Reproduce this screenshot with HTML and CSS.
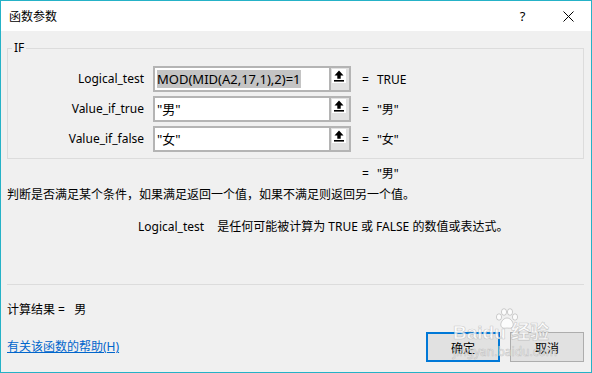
FILE: index.html
```html
<!DOCTYPE html>
<html>
<head>
    <title>函数参数</title>
    <link rel="stylesheet" href="styles.css">
</head>
<body>
    <div class="window">
        <div class="titlebar">
            <div class="title">函数参数</div>
            <div class="title-btn">?</div>
            <div class="title-btn close">
                <svg width="11" height="11" viewBox="0 0 11 11"><path d="M0.5 0.5 L10.5 10.5 M10.5 0.5 L0.5 10.5" stroke="#000" stroke-width="1" fill="none"/></svg>
            </div>
        </div>

        <div class="content">
            <fieldset class="group">
                <legend>IF</legend>

                <div class="arg-row">
                    <div class="arg-label">Logical_test</div>
                    <div class="field">
                        <div class="field-text"><span class="selected">MOD(MID(A2,17,1),2)=1</span></div>
                        <div class="pick"><svg width="14" height="14" viewBox="0 0 14 14"><rect width="14" height="14" fill="#fff"/><path d="M7 1.5 L11.5 6.5 L8.7 6.5 L8.7 9.8 L5.3 9.8 L5.3 6.5 L2.5 6.5 Z" fill="#000"/><rect x="2" y="11" width="10" height="1.6" fill="#000"/></svg></div>
                    </div>
                    <span class="eq">=</span>
                    <span class="arg-value">TRUE</span>
                </div>

                <div class="arg-row">
                    <div class="arg-label">Value_if_true</div>
                    <div class="field">
                        <div class="field-text">"男"</div>
                        <div class="pick"><svg width="14" height="14" viewBox="0 0 14 14"><rect width="14" height="14" fill="#fff"/><path d="M7 1.5 L11.5 6.5 L8.7 6.5 L8.7 9.8 L5.3 9.8 L5.3 6.5 L2.5 6.5 Z" fill="#000"/><rect x="2" y="11" width="10" height="1.6" fill="#000"/></svg></div>
                    </div>
                    <span class="eq">=</span>
                    <span class="arg-value">"男"</span>
                </div>

                <div class="arg-row">
                    <div class="arg-label">Value_if_false</div>
                    <div class="field">
                        <div class="field-text">"女"</div>
                        <div class="pick"><svg width="14" height="14" viewBox="0 0 14 14"><rect width="14" height="14" fill="#fff"/><path d="M7 1.5 L11.5 6.5 L8.7 6.5 L8.7 9.8 L5.3 9.8 L5.3 6.5 L2.5 6.5 Z" fill="#000"/><rect x="2" y="11" width="10" height="1.6" fill="#000"/></svg></div>
                    </div>
                    <span class="eq">=</span>
                    <span class="arg-value">"女"</span>
                </div>
            </fieldset>

            <div class="formula-result"><span>=</span><span class="arg-value">"男"</span></div>

            <div class="description">判断是否满足某个条件，如果满足返回一个值，如果不满足则返回另一个值。</div>

            <div class="arg-help">
                <span>Logical_test</span>
                <span>是任何可能被计算为 TRUE 或 FALSE 的数值或表达式。</span>
            </div>

            <div class="separator"></div>

            <div class="calc-result">计算结果 =&nbsp;&nbsp;&nbsp;男</div>

            <div class="footer">
                <a class="help-link" href="#">有关该函数的帮助(H)</a>
                <div class="buttons">
                    <button class="dlg-btn default">确定</button>
                    <button class="dlg-btn">取消</button>
                </div>
            </div>
        </div>

        <div class="watermark">
            <svg class="wm-paw" width="24" height="22" viewBox="0 0 24 22">
                <g fill="rgba(255,255,255,0.8)" stroke="rgba(150,150,150,0.45)" stroke-width="1">
                    <ellipse cx="4" cy="9" rx="2.6" ry="3.2"/>
                    <ellipse cx="9" cy="4" rx="2.6" ry="3.3"/>
                    <ellipse cx="15" cy="4" rx="2.6" ry="3.3"/>
                    <ellipse cx="20" cy="9" rx="2.6" ry="3.2"/>
                    <path d="M12 10 C8 10 5 15 6 18 C7 21 10 20 12 20 C14 20 17 21 18 18 C19 15 16 10 12 10 Z"/>
                </g>
            </svg>
            <div class="wm-logo">Baidu&nbsp;经验</div>
            <div class="wm-url">jingyan.baidu.com</div>
        </div>
    </div>
</body>
</html>
```

FILE: styles.css
```css
:root {
    --accent: #25b2c7;
    --dialog: #f0f0f0;
    --line: #dcdcdc;
    --field-border: #b4b4b4;
    --text: #000;
    --link: #0066cc;
}

* {
    box-sizing: border-box;
}

body {
    margin: 0;
    font-family: "Noto Sans", "Noto Sans CJK SC", sans-serif;
    font-size: 12px;
    color: var(--text);
}

.window {
    position: relative;
    width: 592px;
    height: 373px;
    border: 1px solid var(--accent);
    background: var(--dialog);
    overflow: hidden;
}

.titlebar {
    height: 30px;
    background: #fff;
    display: flex;
    align-items: center;
}

.title {
    flex: 1;
    padding-left: 8px;
    font-family: "Noto Sans CJK SC", sans-serif;
    line-height: 16px;
}

.title-btn {
    width: 45px;
    height: 30px;
    display: flex;
    align-items: center;
    justify-content: center;
    font-size: 13px;
}

.title-btn.close {
    width: 46px;
}

.content {
    padding: 0 7px 0 6px;
}

/* argument group */
.group {
    margin: 9px 0 0;
    padding: 10px 0 6px;
    border: 1px solid var(--line);
    min-width: 0;
}

.group legend {
    margin-left: 4px;
    padding: 0 2px;
    line-height: 16px;
}

.arg-row {
    display: flex;
    align-items: center;
    height: 26px;
    margin-bottom: 4px;
}

.arg-row:last-child {
    margin-bottom: 0;
}

.arg-label {
    width: 136px;
    margin-right: 9px;
    text-align: right;
    line-height: 16px;
}

.field {
    width: 198px;
    height: 26px;
    display: flex;
    border: 2px solid var(--field-border);
    background: #fff;
}

.field-text {
    flex: 1;
    padding-left: 2px;
    font-size: 13px;
    line-height: 22px;
    white-space: nowrap;
    overflow: hidden;
}

.selected {
    background: #c4c4c4;
}

.pick {
    width: 20px;
    background: #e1e1e1;
    border-left: 2px solid var(--field-border);
    padding: 1px 0 0 1px;
}

.pick svg {
    display: block;
}

.eq {
    margin-left: 11px;
}

.arg-value {
    margin-left: 8px;
}

.formula-result {
    margin: 7px 0 0 355px;
    line-height: 16px;
}

.description {
    margin-top: 5px;
    line-height: 16px;
    white-space: nowrap;
}

.arg-help {
    margin: 16px 0 0 131px;
    line-height: 16px;
    display: flex;
    gap: 13px;
}

.separator {
    margin-top: 49px;
    height: 1px;
    background: var(--line);
}

.calc-result {
    margin-top: 17px;
    line-height: 16px;
}

.footer {
    margin-top: 14px;
    display: flex;
    align-items: center;
    justify-content: space-between;
}

.help-link {
    color: var(--link);
    line-height: 16px;
}

.buttons {
    display: flex;
    gap: 10px;
}

.dlg-btn {
    width: 74px;
    height: 30px;
    font-family: "Noto Sans CJK SC", sans-serif;
    font-size: 12px;
    color: var(--text);
    background: #e1e1e1;
    border: 1px solid #adadad;
    padding: 0;
}

.dlg-btn.default {
    border: 2px solid #0078d7;
}

/* faint site watermark over the buttons */
.watermark {
    position: absolute;
    left: 452px;
    top: 307px;
    color: rgba(255, 255, 255, 0.8);
    -webkit-text-stroke: 0.7px rgba(150, 150, 150, 0.45);
    pointer-events: none;
}

.wm-paw {
    display: block;
    margin-left: 42px;
}

.wm-logo {
    font-family: "Liberation Sans", "Noto Sans CJK SC", sans-serif;
    font-weight: bold;
    font-size: 19px;
    line-height: 18px;
    margin-top: -6px;
}

.wm-url {
    font-size: 12px;
    line-height: 14px;
    margin-top: 3px;
}
```
